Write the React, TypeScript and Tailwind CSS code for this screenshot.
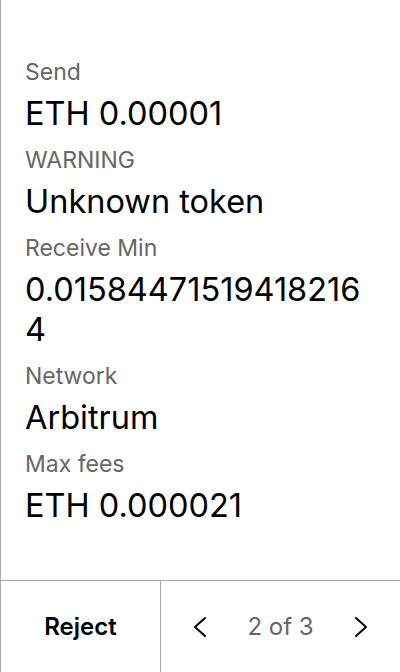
const rows: { label: string; value: string }[] = [
    { label: 'Send', value: 'ETH 0.00001' },
    { label: 'WARNING', value: 'Unknown token' },
    { label: 'Receive Min', value: '0.015844715194182164' },
    { label: 'Network', value: 'Arbitrum' },
    { label: 'Max fees', value: 'ETH 0.000021' },
];

function Chevron({ dir }: { dir: 'left' | 'right' }) {
    return (
        <svg width="24" height="24" viewBox="0 0 24 24" fill="none" stroke="#000" strokeWidth="2" strokeLinecap="round" strokeLinejoin="round">
            {dir === 'left' ? <path d="M16 3L6 12l10 9" /> : <path d="M8 3l10 9-10 9" />}
        </svg>
    );
}

export default function App() {
    return (
        <div className="flex h-[672px] w-[400px] flex-col border-l border-[#a8a8a8] bg-white font-['Inter',sans-serif]">
            <div className="flex-1 px-6 pt-[58px]">
                {rows.map(r => (
                    <div key={r.label} className="mb-3">
                        <div className="mb-2 text-[23px] leading-[28px] text-[#666]">{r.label}</div>
                        <div className="break-all text-[32.5px] leading-[40px] text-black">{r.value}</div>
                    </div>
                ))}
            </div>
            <div className="flex h-[92px] border-t border-[#a8a8a8]">
                <button className="flex w-[160px] items-center justify-center border-r border-[#a8a8a8] text-[24px] font-semibold text-black">
                    Reject
                </button>
                <div className="flex flex-1 items-center justify-between px-7">
                    <Chevron dir="left" />
                    <span className="text-[24px] text-[#666]">2 of 3</span>
                    <Chevron dir="right" />
                </div>
            </div>
        </div>
    );
}
